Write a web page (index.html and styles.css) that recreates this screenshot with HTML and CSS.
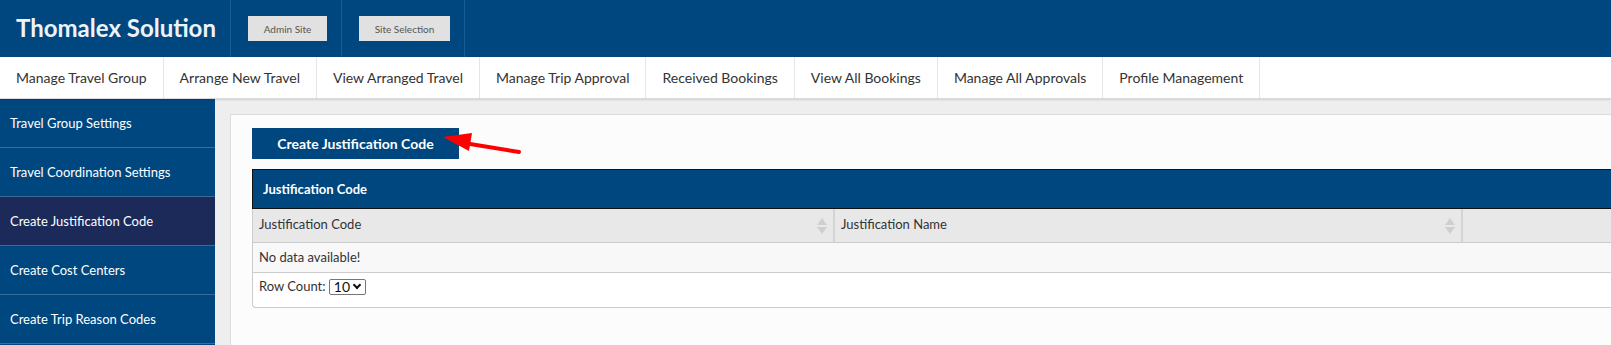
FILE: index.html
```html
<!DOCTYPE html>
<html>
	<head>
		<link rel="stylesheet" href="styles.css">
	</head>
	<body>
		<div class="topbar">
			<div class="brand">Thomalex Solution</div>
			<div class="top-cell site-cell">
				<input class="top-btn" type="button" value="Admin Site" />
			</div>
			<div class="top-cell select-cell">
				<input class="top-btn wide" type="button" value="Site Selection" />
			</div>
		</div>
		<div class="nav">
			<a class="nav-item" href="#">Manage Travel Group</a>
			<a class="nav-item" href="#">Arrange New Travel</a>
			<a class="nav-item" href="#">View Arranged Travel</a>
			<a class="nav-item" href="#">Manage Trip Approval</a>
			<a class="nav-item" href="#">Received Bookings</a>
			<a class="nav-item" href="#">View All Bookings</a>
			<a class="nav-item" href="#">Manage All Approvals</a>
			<a class="nav-item" href="#">Profile Management</a>
		</div>
		<div class="main">
			<div class="sidebar">
				<a class="side-item" href="#">Travel Group Settings</a>
				<a class="side-item" href="#">Travel Coordination Settings</a>
				<a class="side-item active" href="#">Create Justification Code</a>
				<a class="side-item" href="#">Create Cost Centers</a>
				<a class="side-item" href="#">Create Trip Reason Codes</a>
			</div>
			<div class="content">
				<div class="panel">
					<div class="toolbar">
						<input class="create-btn" type="button" value="Create Justification Code" />
						<svg class="arrow" width="84" height="32" viewBox="0 0 84 32">
							<line x1="24" y1="18" x2="79" y2="27" stroke="#ff0000" stroke-width="4" stroke-linecap="round" />
							<polygon points="3,12 32,8 29,26" fill="#ff0000" />
						</svg>
					</div>
					<div class="grid">
						<div class="grid-title">Justification Code</div>
						<div class="grid-head">
							<div class="col col-code">Justification Code<span class="sort"></span></div>
							<div class="col col-name">Justification Name<span class="sort"></span></div>
							<div class="col col-rest"></div>
						</div>
						<div class="grid-empty">No data available!</div>
						<div class="grid-foot">
							Row Count:
							<span class="select-wrap">
								<select class="row-count">
									<option>10</option>
									<option>25</option>
									<option>50</option>
								</select>
							</span>
						</div>
					</div>
				</div>
			</div>
		</div>
	</body>
</html>
```

FILE: styles.css
```css
html {
	height: 100%;
}
body {
	margin: 0;
	height: 100%;
	overflow: hidden;
	display: flex;
	flex-direction: column;
	font-family: Lato, "Open Sans", Arial, sans-serif;
	font-size: 14px;
	color: #333;
	background-color: #eeeeee;
}
.topbar {
	display: flex;
	flex-shrink: 0;
	height: 57px;
	background-color: #004780;
}
.brand {
	width: 214px;
	padding-left: 16px;
	border-right: 1px solid #195a91;
	color: #eef3f8;
	font-size: 24px;
	font-weight: bold;
	line-height: 55px;
	white-space: nowrap;
}
.top-cell {
	padding: 16px 0 0 17px;
	border-right: 1px solid #195a91;
	box-sizing: border-box;
}
.site-cell {
	width: 111px;
}
.select-cell {
	width: 123px;
}
.top-btn {
	width: 79px;
	height: 25px;
	padding: 0;
	border: none;
	background-color: #e1e1e1;
	color: #555;
	font-family: Lato, Arial, sans-serif;
	font-size: 10px;
}
.top-btn.wide {
	width: 91px;
}
.nav {
	display: flex;
	flex-shrink: 0;
	height: 41px;
	background-color: #fff;
	border-bottom: 1px solid #d9d9d9;
	box-shadow: 0 1px 2px rgba(0, 0, 0, 0.12);
	position: relative;
}
.nav-item {
	display: block;
	padding: 0 16px;
	line-height: 41px;
	color: #333;
	text-decoration: none;
	border-right: 1px solid #e6e6e6;
	white-space: nowrap;
}
.main {
	display: flex;
	flex: 1;
	min-height: 0;
}
.sidebar {
	width: 215px;
	flex-shrink: 0;
	background-color: #004780;
}
.side-item {
	display: block;
	height: 48px;
	padding-left: 10px;
	line-height: 48px;
	font-size: 13px;
	color: #fff;
	text-decoration: none;
	border-bottom: 1px solid #3b6b98;
}
.side-item.active {
	background-color: #1c2a5a;
}
.content {
	flex: 1;
	min-width: 0;
	padding: 15px 0 0 15px;
	overflow: hidden;
}
.panel {
	width: 1500px;
	height: 100%;
	box-sizing: border-box;
	padding: 13px 0 0 21px;
	background-color: #fcfcfc;
	border: 1px solid #dcdcdc;
	border-bottom: none;
}
.toolbar {
	position: relative;
	height: 31px;
	margin-bottom: 10px;
}
.create-btn {
	width: 207px;
	height: 31px;
	padding: 0;
	border: none;
	background-color: #004780;
	color: #fff;
	font-family: Lato, Arial, sans-serif;
	font-size: 14px;
	font-weight: bold;
}
.arrow {
	position: absolute;
	left: 188px;
	top: -3px;
}
.grid {
	font-size: 13px;
	border-left: 1px solid #cccccc;
	border-bottom: 1px solid #cccccc;
	border-bottom-left-radius: 4px;
	background-color: #fff;
}
.grid-title {
	height: 38px;
	padding-left: 10px;
	line-height: 38px;
	background-color: #004780;
	border-top: 1px solid #111;
	border-left: 1px solid #111;
	border-bottom: 1px solid #111;
	margin-left: -1px;
	color: #fff;
	font-weight: bold;
}
.grid-head {
	display: flex;
	height: 33px;
	background-color: #e8e8e8;
	border-bottom: 1px solid #cccccc;
}
.col {
	position: relative;
	padding: 7px 0 0 6px;
	box-sizing: border-box;
	border-right: 2px solid #d4d4d4;
}
.col-code {
	width: 582px;
}
.col-name {
	width: 628px;
}
.col-rest {
	flex: 1;
	border-right: none;
}
.sort {
	position: absolute;
	right: 5px;
	top: 9px;
	width: 11px;
	height: 16px;
}
.sort::before,
.sort::after {
	content: "";
	position: absolute;
	left: 0;
	border-left: 5.5px solid transparent;
	border-right: 5.5px solid transparent;
}
.sort::before {
	top: 0;
	border-bottom: 7px solid #cfcfcf;
}
.sort::after {
	bottom: 0;
	border-top: 7px solid #cfcfcf;
}
.grid-empty {
	height: 29px;
	padding-left: 6px;
	line-height: 29px;
	background-color: #f8f8f8;
	border-bottom: 1px solid #cccccc;
}
.grid-foot {
	height: 34px;
	padding: 5px 0 0 6px;
	box-sizing: border-box;
}
.select-wrap {
	position: relative;
	display: inline-block;
	vertical-align: top;
	margin-top: 1px;
}
.select-wrap::after {
	content: "";
	position: absolute;
	right: 6px;
	top: 3px;
	width: 4px;
	height: 4px;
	border-right: 2px solid #111;
	border-bottom: 2px solid #111;
	transform: rotate(45deg);
	pointer-events: none;
}
.row-count {
	-webkit-appearance: none;
	appearance: none;
	display: block;
	width: 37px;
	height: 16px;
	padding: 0 0 0 4px;
	font-family: Lato, Arial, sans-serif;
	font-size: 14px;
	line-height: 14px;
	color: #111;
	border: 1px solid #767676;
	border-radius: 2px;
	background-color: #fff;
}
```
